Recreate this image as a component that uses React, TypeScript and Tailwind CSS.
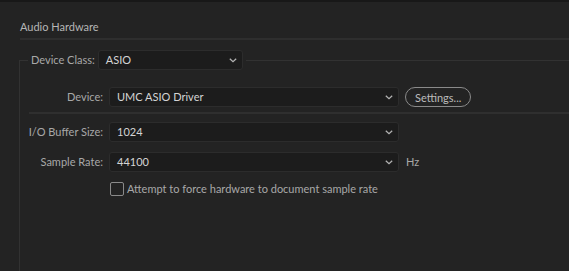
import React from 'react'

// little down chevron used in the dropdowns
function Chevron() {
  return (
    <svg width="8" height="5" viewBox="0 0 8 5" className="shrink-0">
      <path d="M0.8 0.8 L4 3.8 L7.2 0.8" fill="none" stroke="#b4b4b4" strokeWidth="1.2" />
    </svg>
  )
}

function Select({ value, className = '' }: { value: string; className?: string }) {
  return (
    <div
      className={`flex items-center justify-between h-5 pl-[7px] pr-[5px] bg-[#1c1c1c] border border-[#2c2c2c] rounded-[3px] text-[#d4d4d4] ${className}`}
    >
      <span>{value}</span>
      <Chevron />
    </div>
  )
}

function Row({ label, children }: { label: string; children: React.ReactNode }) {
  return (
    <div className="flex items-center">
      <div className="w-[89px] text-right text-[#a8a8a8] pr-[6px] whitespace-nowrap">{label}</div>
      {children}
    </div>
  )
}

export default function App() {
  return (
    <div
      className="w-[569px] h-[271px] overflow-hidden bg-[#232323] text-[11px] leading-4 flex flex-col"
      style={{ fontFamily: 'Lato, "Liberation Sans", sans-serif' }}
    >
      <div className="h-[2px] bg-[#181818] shrink-0" />

      {/* Header */}
      <div className="pl-5 mt-[17px] text-[#b6b6b6]">Audio Hardware</div>
      <div className="ml-5 mt-[3px] h-[2px] bg-[#2e2e2e] shrink-0" />

      {/* Device class group */}
      <fieldset className="ml-[19px] mt-[10px] border-l border-t border-[#323232] pl-[8px] flex-1 min-h-[260px]">
        <legend className="flex items-center px-[3px]">
          <span className="text-[#a8a8a8] mr-[3px]">Device Class:</span>
          <Select value="ASIO" className="w-[145px]" />
        </legend>

        <div className="-ml-[8px] mt-[17px]">
          <Row label="Device:">
            <Select value="UMC ASIO Driver" className="w-[290px]" />
            <button className="ml-[6px] h-5 px-[9px] rounded-full border-[1.5px] border-[#8a8a8a] text-[#bcbcbc] leading-none">
              Settings...
            </button>
          </Row>

          <div className="ml-[9px] mt-[5px] h-[2px] bg-[#2f2f2f]" />

          <div className="mt-[8px] flex flex-col gap-[10px]">
            <Row label="I/O Buffer Size:">
              <Select value="1024" className="w-[290px]" />
            </Row>
            <Row label="Sample Rate:">
              <Select value="44100" className="w-[290px]" />
              <span className="ml-[7px] text-[#a8a8a8]">Hz</span>
            </Row>
          </div>

          <label className="flex items-center ml-[90px] mt-[9px] text-[#a8a8a8]">
            <span className="w-[14px] h-[14px] rounded-[2px] border-[1.5px] border-[#8a8a8a] mr-[3px]" />
            Attempt to force hardware to document sample rate
          </label>
        </div>
      </fieldset>
    </div>
  )
}
